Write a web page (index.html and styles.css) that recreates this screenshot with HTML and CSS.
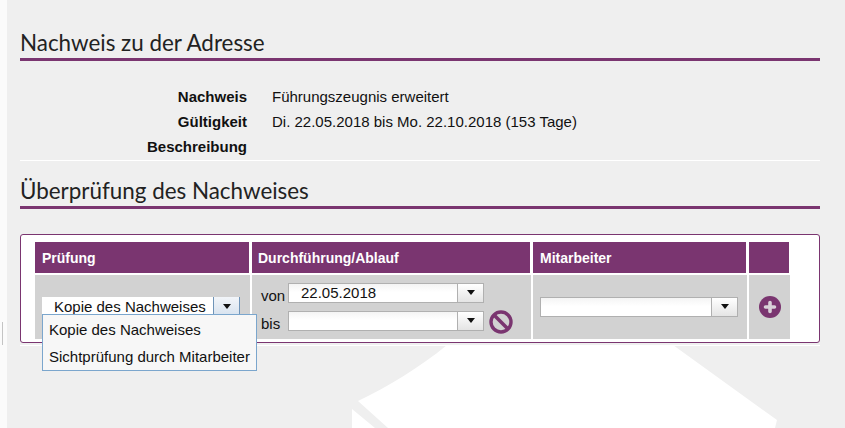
FILE: index.html
```html
<!DOCTYPE html>
<html lang="de">
<head>
<meta charset="utf-8">
<title>Nachweis zu der Adresse</title>
<link rel="stylesheet" href="styles.css">
</head>
<body>
<i class="edge-mark"></i>
<main class="page">
  <svg class="watermark" width="838" height="428" viewBox="0 0 838 428" aria-hidden="true">
    <path fill="#fff" d="M440 345C412 368 382 386 351 401L381 428H768L770 420L666 345Z"/>
    <path fill="#fff" d="M345 409L368 428H345Z"/>
  </svg>
  <div class="content">
    <h2 class="section-title">Nachweis zu der Adresse</h2>
    <dl class="facts">
      <div class="fact"><dt>Nachweis</dt><dd>Führungszeugnis erweitert</dd></div>
      <div class="fact"><dt>Gültigkeit</dt><dd>Di. 22.05.2018 bis Mo. 22.10.2018 (153 Tage)</dd></div>
      <div class="fact"><dt>Beschreibung</dt><dd></dd></div>
    </dl>
    <h2 class="section-title">Überprüfung des Nachweises</h2>
    <section class="panel">
      <div class="grid">
        <div class="head">Prüfung</div>
        <div class="head">Durchführung/Ablauf</div>
        <div class="head">Mitarbeiter</div>
        <div class="head"></div>

        <div class="cell cell-check">
          <div class="combo combo-open">
            <span class="combo-value">Kopie des Nachweises</span>
            <span class="combo-btn"><i class="caret"></i></span>
          </div>
          <ul class="menu">
            <li>Kopie des Nachweises</li>
            <li>Sichtprüfung durch Mitarbeiter</li>
          </ul>
        </div>

        <div class="cell cell-dates">
          <div class="date-row">
            <span class="date-label">von</span>
            <div class="combo combo-date">
              <span class="combo-value">22.05.2018</span>
              <span class="combo-btn"><i class="caret"></i></span>
            </div>
          </div>
          <div class="date-row">
            <span class="date-label">bis</span>
            <div class="combo combo-date">
              <span class="combo-value"></span>
              <span class="combo-btn"><i class="caret"></i></span>
            </div>
            <svg class="icon-ban" width="24" height="24" viewBox="0 0 24 24" aria-hidden="true">
              <circle cx="12" cy="12" r="10" fill="none" stroke="#7a3570" stroke-width="3.4"/>
              <path d="M5 5L19 19" stroke="#7a3570" stroke-width="3.6"/>
            </svg>
          </div>
        </div>

        <div class="cell cell-staff">
          <div class="combo combo-staff">
            <span class="combo-value"></span>
            <span class="combo-btn"><i class="caret"></i></span>
          </div>
        </div>

        <div class="cell cell-add">
          <svg width="22" height="22" viewBox="0 0 22 22" aria-hidden="true">
            <circle cx="11" cy="11" r="11" fill="#7a3570"/>
            <path d="M11 6.5V15.5M6.5 11H15.5" stroke="#d9d0d8" stroke-width="3.6" stroke-linecap="round"/>
          </svg>
        </div>
      </div>
    </section>
    <hr class="foot-rule">
  </div>
</main>
</body>
</html>
```
FILE: styles.css
```css
* { box-sizing: border-box; }
html, body { margin: 0; height: 428px; overflow: hidden; }
body {
  background: #fbfbfb;
  padding-left: 7px;
  font-family: "Liberation Sans", Arial, sans-serif;
  font-size: 15px;
  color: #111;
}
.edge-mark {
  position: absolute;
  left: 2px;
  top: 322px;
  width: 1px;
  height: 23px;
  background: #c4c4c4;
}
.page {
  position: relative;
  height: 428px;
  background: #efefef;
  overflow: hidden;
}
.watermark { position: absolute; left: 0; top: 0; }
.content {
  position: relative;
  padding: 30px 25px 0 13px;
}
.section-title {
  margin: 0;
  height: 31px;
  border-bottom: 3px solid #7a3570;
  font-family: Lato, "Open Sans", sans-serif;
  font-weight: 400;
  font-size: 22.4px;
  line-height: 25px;
  color: #222;
}
.facts {
  margin: 22.6px 0 17px;
  padding-bottom: 0.2px;
  border-bottom: 1px solid #fff;
}
.fact {
  display: flex;
  height: 25.4px;
  line-height: 25.4px;
}
.fact dt {
  width: 227px;
  text-align: right;
  font-weight: 700;
}
.fact dd { margin: 0 0 0 25px; }
.panel {
  margin-top: 25px;
  height: 109px;
  padding: 7px 0 0 14px;
  background: #fff;
  border: 1px solid #7a3570;
  border-radius: 3px;
}
.grid {
  display: grid;
  grid-template-columns: 215px 279px 214px 41px;
  grid-template-rows: 31px 64px;
  column-gap: 2px;
  row-gap: 2px;
}
.head {
  margin-right: 1px;
  padding-left: 7px;
  background: #7a3570;
  color: #fff;
  font-size: 14px;
  font-weight: 700;
  line-height: 32px;
}
.head:nth-child(2) { padding-left: 6px; }
.cell { background: #d2d2d2; position: relative; }
.cell-check { padding: 22px 0 0 7px; }
.cell-dates { padding: 4px 0 0 9px; }
.cell-staff { padding: 22px 0 0 7px; }
.cell-add { display: flex; align-items: center; justify-content: center; padding-left: 1px; }
.combo {
  display: flex;
  height: 20px;
  background: linear-gradient(#f4f4f4, #fff 45%);
  border: 1px solid #b0b0b0;
}
.combo-value { flex: 1; padding-left: 12px; line-height: 18px; }
.combo-btn {
  width: 26px;
  display: flex;
  align-items: center;
  justify-content: center;
  border-left: 1px solid #b0b0b0;
  background: linear-gradient(#fff, #e4e4e4);
}
.caret {
  width: 0;
  height: 0;
  border-left: 4.5px solid transparent;
  border-right: 4.5px solid transparent;
  border-top: 5px solid #111;
}
.combo-open {
  width: 198px;
  border: 0;
  border-right: 1px solid #6f94b8;
  background: #fff;
}
.combo-open .combo-value { padding-top: 1px; }
.combo-open .combo-btn {
  border-left: 1px solid #6f94b8;
  background: linear-gradient(#f2f5f9, #d5e1ee);
}
.menu {
  position: absolute;
  z-index: 2;
  left: 7px;
  top: 39px;
  width: 215px;
  height: 57px;
  margin: 0;
  padding: 1px 0 0;
  list-style: none;
  background: #f7f7f7;
  border: 1px solid #7ba6cd;
  white-space: nowrap;
}
.menu li { height: 27px; line-height: 27px; padding-left: 6px; }
.date-row { display: flex; align-items: center; height: 28px; }
.date-label { width: 27px; padding-top: 6px; }
.combo-date { width: 196px; }
.icon-ban { margin: 2px 0 0 5px; }
.combo-staff { width: 198px; }
.foot-rule {
  margin: 2px 0 0;
  height: 1px;
  border: 0;
  background: #fff;
}
```
